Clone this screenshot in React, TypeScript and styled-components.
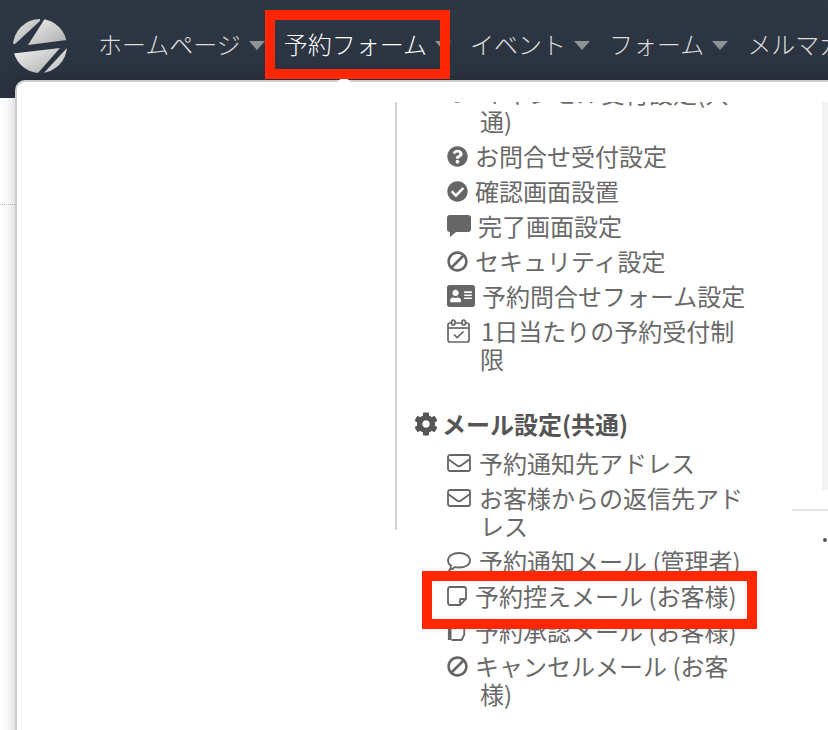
import React from 'react';
import styled, { createGlobalStyle } from 'styled-components';
import { FaAddressCard, FaBan, FaCheckCircle, FaCog, FaQuestionCircle } from 'react-icons/fa';

const GlobalStyle = createGlobalStyle`
  html, body {
    margin: 0;
    padding: 0;
    background: #fff;
  }
`;

const Page = styled.div`
  position: relative;
  width: 828px;
  height: 730px;
  overflow: hidden;
  font-family: 'Noto Sans CJK JP', 'Noto Sans', sans-serif;
`;

const Header = styled.header`
  display: flex;
  align-items: flex-start;
  height: 98px;
  padding: 19px 0 0 13px;
  box-sizing: border-box;
  background: linear-gradient(#2e3844, #2a3140);
`;

const LogoMark = styled.svg`
  flex: none;
`;

const Nav = styled.nav`
  display: flex;
  flex: none;
  margin-left: 31px;
  white-space: nowrap;
`;

const NavItem = styled.div<{ $active?: boolean }>`
  display: flex;
  align-items: center;
  gap: 8px;
  height: 48px;
  margin-right: 19px;
  font-size: 24px;
  font-weight: 300;
  color: ${({ $active }) => ($active ? '#ffffff' : '#dcdcdc')};
`;

const Caret = styled.span`
  width: 0;
  height: 0;
  margin-top: 5px;
  border-left: 8px solid transparent;
  border-right: 8px solid transparent;
  border-top: 9px solid #8f9296;
`;

const Dropdown = styled.div`
  position: absolute;
  top: 80px;
  left: 15px;
  width: 860px;
  height: 700px;
  display: flex;
  box-sizing: border-box;
  background: #fff;
  border: 2px solid #cccccc;
  border-radius: 10px 0 0 0;
  box-shadow: 0 0 14px rgba(0, 0, 0, 0.22);
`;

const DropdownCaret = styled.span`
  position: absolute;
  top: -6px;
  left: 320px;
  width: 0;
  height: 0;
  border-left: 7px solid transparent;
  border-right: 7px solid transparent;
  border-bottom: 6px solid #fff;
`;

const Scroll = styled.div`
  width: 378px;
  height: 428px;
  margin-top: 20px;
  border-right: 2px solid #d4d4d4;
  flex: none;
`;

const MenuColumn = styled.div`
  width: 396px;
  height: 608px;
  margin-top: 20px;
  overflow: hidden;
  flex: none;
  color: #696969;
  font-size: 24px;
  line-height: 28px;
`;

const MenuInner = styled.div`
  margin-top: -23px;
`;

const Group = styled.ul`
  list-style: none;
  margin: 0;
  padding: 0 0 0 49px;
`;

const Item = styled.li`
  box-sizing: border-box;
  width: 303px;
  padding: 0 0 7px 34px;
`;

const IconBox = styled.span<{ $w: number; $s?: number }>`
  display: inline-flex;
  align-items: center;
  vertical-align: top;
  width: ${({ $w }) => $w}px;
  height: 28px;
  margin: 0 8px 0 -34px;
  color: #666666;

  svg {
    flex: none;
    margin-left: 1px;
    width: ${({ $w, $s }) => $s ?? $w}px;
    height: auto;
  }
`;

const SlashIcon = styled(FaBan)`
  transform: scaleX(-1);
`;

const Heading = styled.h4`
  display: flex;
  align-items: center;
  gap: 4px;
  margin: 30px 0 11px 0;
  padding-left: 17px;
  font-size: 24px;
  line-height: 28px;
  font-weight: 700;
  color: #555555;
`;

const SideColumn = styled.div`
  flex: 1;
  display: flex;
  flex-direction: column;
  margin-top: 20px;
  margin-left: -1px;
`;

const SidePanel = styled.div`
  height: 388px;
  margin-left: 30px;
  background: #f4f4f4;
`;

const SideRule = styled.div`
  height: 2px;
  margin-top: 19px;
  background: #e4e4e4;
`;

const SideDot = styled.div`
  width: 4px;
  height: 4px;
  margin: 27px 0 0 31px;
  border-radius: 50%;
  background: #555;
`;

const Backdrop = styled.div`
  width: 15px;
  height: 632px;
`;

const DottedRule = styled.div`
  height: 0;
  margin-top: 106px;
  border-top: 1px dotted #bbbbbb;
`;

const Highlight = styled.div<{ $x: number; $y: number; $w: number; $h: number }>`
  position: absolute;
  left: ${({ $x }) => $x}px;
  top: ${({ $y }) => $y}px;
  width: ${({ $w }) => $w}px;
  height: ${({ $h }) => $h}px;
  box-sizing: border-box;
  border: 10px solid #ff2600;
`;

const Logo = () => (
  <LogoMark width="54" height="54" viewBox="0 0 54 54">
    <defs>
      <linearGradient id="lg" x1="0" y1="0" x2="1" y2="1">
        <stop offset="0" stopColor="#f6f6f6" />
        <stop offset="1" stopColor="#a6a6a6" />
      </linearGradient>
      <clipPath id="lc">
        <circle cx="27" cy="27" r="27" />
      </clipPath>
    </defs>
    <g clipPath="url(#lc)" fill="url(#lg)">
      <path d="M27 2 L2 25 L-5 25 L-5 -5 L27 -5 Z" />
      <path d="M31 1 L15 26 L54 21 L60 -5 L31 -5 Z" />
      <path d="M-5 35 L47 29 L25 54 L25 60 L-5 60 Z" />
      <path d="M54 29 L29 56 L60 60 Z" />
    </g>
  </LogoMark>
);

// thin outline icons, the package ones are too heavy next to the reference
const CommentIcon = () => (
  <svg viewBox="0 0 24 22" fill="#666">
    <path d="M3 0 H21 a3 3 0 0 1 3 3 V14 a3 3 0 0 1 -3 3 H9 L3 22 V17 a3 3 0 0 1 -3 -3 V3 a3 3 0 0 1 3 -3 Z" />
  </svg>
);

const CalendarIcon = () => (
  <svg viewBox="0 0 23 24" fill="none" stroke="#666" strokeWidth="1.7">
    <rect x="1" y="4" width="21" height="19" rx="2" />
    <path d="M1 9 H22" />
    <rect x="4.6" y="1" width="3.4" height="5" rx="1.7" fill="#fff" />
    <rect x="15" y="1" width="3.4" height="5" rx="1.7" fill="#fff" />
    <path d="M7 15.5 L10.2 18.5 L16.5 12.5" />
  </svg>
);

const MailIcon = () => (
  <svg viewBox="0 0 24 18" fill="none" stroke="#666" strokeWidth="1.8">
    <rect x="1" y="1" width="22" height="16" rx="2" />
    <path d="M1 5 L10 11.5 Q12 13 14 11.5 L23 5" />
  </svg>
);

const BubbleIcon = () => (
  <svg viewBox="0 0 24 19" fill="none" stroke="#666" strokeWidth="1.8">
    <path d="M12 1 C18 1 23 4 23 8.5 C23 13 18 15.5 12 15.5 C10.5 15.5 9 15.3 8 15 C6.5 16.5 4.5 17.5 2.5 18 C3.5 16.5 4 15 4 13.5 C2 12.3 1 10.5 1 8.5 C1 4 6 1 12 1 Z" />
  </svg>
);

const NoteIcon = () => (
  <svg viewBox="0 0 20 20" fill="none" stroke="#666" strokeWidth="1.8">
    <path d="M3 1 H17 a2 2 0 0 1 2 2 V13 L13 19 H3 a2 2 0 0 1 -2 -2 V3 a2 2 0 0 1 2 -2 Z" />
    <path d="M19 13 H14 a1 1 0 0 0 -1 1 V19" />
  </svg>
);

const HeavyNote = () => (
  <svg viewBox="0 0 22 24" fill="none">
    <path d="M2 2 H4 V21 H2 Z" fill="#666" stroke="#666" strokeWidth="2" />
    <path d="M5 2 H19 V16 L16 22 H5" stroke="#666" strokeWidth="2" strokeLinejoin="round" />
  </svg>
);

const App: React.FC = () => {
  return (
    <Page>
      <GlobalStyle />
      <Header>
        <Logo />
        <Nav>
          <NavItem>ホームページ<Caret /></NavItem>
          <NavItem $active>予約フォーム<Caret /></NavItem>
          <NavItem>イベント<Caret /></NavItem>
          <NavItem>フォーム<Caret /></NavItem>
          <NavItem>メルマガ<Caret /></NavItem>
        </Nav>
      </Header>
      <Backdrop>
        <DottedRule />
      </Backdrop>
      <Dropdown>
        <DropdownCaret />
        <Scroll />
        <MenuColumn>
          <MenuInner>
            <Group>
              <Item><IconBox $w={27} $s={20}><FaCog /></IconBox>キャンセル受付設定(共通)</Item>
              <Item><IconBox $w={21}><FaQuestionCircle /></IconBox>お問合せ受付設定</Item>
              <Item><IconBox $w={21}><FaCheckCircle /></IconBox>確認画面設置</Item>
              <Item><IconBox $w={24}><CommentIcon /></IconBox>完了画面設定</Item>
              <Item><IconBox $w={21}><SlashIcon /></IconBox>セキュリティ設定</Item>
              <Item><IconBox $w={28}><FaAddressCard /></IconBox>予約問合せフォーム設定</Item>
              <Item><IconBox $w={27} $s={23}><CalendarIcon /></IconBox>1日当たりの予約受付制限</Item>
            </Group>
            <Heading><FaCog />メール設定(共通)</Heading>
            <Group>
              <Item><IconBox $w={25} $s={24}><MailIcon /></IconBox>予約通知先アドレス</Item>
              <Item><IconBox $w={25} $s={24}><MailIcon /></IconBox>お客様からの返信先アドレス</Item>
              <Item><IconBox $w={25} $s={24}><BubbleIcon /></IconBox>予約通知メール (管理者)</Item>
              <Item><IconBox $w={21} $s={20}><NoteIcon /></IconBox>予約控えメール (お客様)</Item>
              <Item><IconBox $w={21} $s={20}><HeavyNote /></IconBox>予約承認メール (お客様)</Item>
              <Item><IconBox $w={21}><SlashIcon /></IconBox>キャンセルメール (お客様)</Item>
            </Group>
          </MenuInner>
        </MenuColumn>
        <SideColumn>
          <SidePanel />
          <SideRule />
          <SideDot />
        </SideColumn>
      </Dropdown>
      <Highlight $x={265} $y={10} $w={185} $h={69} />
      <Highlight $x={422} $y={571} $w={335} $h={58} />
    </Page>
  );
};

export default App;
